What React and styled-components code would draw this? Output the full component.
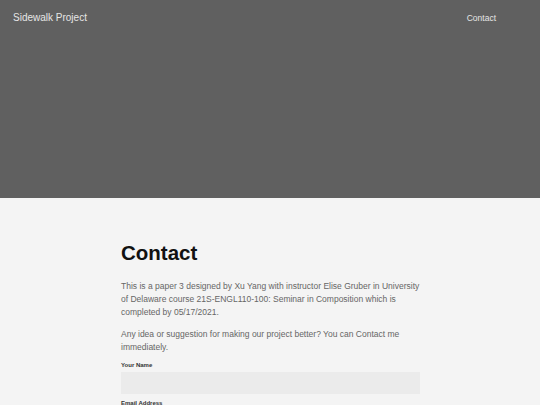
import styled, { createGlobalStyle } from 'styled-components';

const GlobalStyle = createGlobalStyle`
  html, body {
    margin: 0;
    padding: 0;
    background: #f4f4f4;
    font-family: "Liberation Sans", Arial, sans-serif;
  }
  * { box-sizing: border-box; }
`;

const Hero = styled.header`
  height: 198px;
  background: #606060;
  display: flex;
  flex-direction: column;
`;

const Nav = styled.nav`
  display: flex;
  justify-content: space-between;
  align-items: center;
  padding: 12px 44px 0 13px;
`;

const Brand = styled.a`
  color: #e6e6e6;
  font-size: 10px;
  line-height: 12px;
  text-decoration: none;
`;

const NavLink = styled.a`
  color: #e6e6e6;
  font-size: 8.5px;
  line-height: 12px;
  text-decoration: none;
`;

const Main = styled.main`
  width: 300px;
  margin: 0 auto;
  padding: 43px 0 0 1px;
`;

const Title = styled.h1`
  margin: 0 0 15px;
  font-size: 20.5px;
  line-height: 24px;
  font-weight: 700;
  color: #111;
`;

const Intro = styled.div`
  display: flex;
  flex-direction: column;
  gap: 10px;
  margin-bottom: 8px;
`;

const Text = styled.p`
  margin: 0;
  font-size: 8.5px;
  line-height: 12.8px;
  color: #666;
`;

const Form = styled.form`
  display: flex;
  flex-direction: column;
`;

const Field = styled.div`
  display: flex;
  flex-direction: column;
  margin-bottom: 6px;
`;

const Label = styled.label`
  font-size: 6px;
  line-height: 7.2px;
  font-weight: 700;
  color: #333;
  margin-bottom: 3px;
`;

const Input = styled.input`
  height: 22px;
  border: none;
  background: #ebebeb;
  padding: 0 6px;
  font-size: 8px;
  font-family: inherit;
  outline: none;
`;

export default function App() {
  return (
    <>
      <GlobalStyle />
      <Hero>
        <Nav>
          <Brand href="#">Sidewalk Project</Brand>
          <NavLink href="#">Contact</NavLink>
        </Nav>
      </Hero>
      <Main>
        <Title>Contact</Title>
        <Intro>
          <Text>
            This is a paper 3 designed by Xu Yang with instructor Elise Gruber in University
            of Delaware course 21S-ENGL110-100: Seminar in Composition which is
            completed by 05/17/2021.
          </Text>
          <Text>
            Any idea or suggestion for making our project better? You can Contact me
            immediately.
          </Text>
        </Intro>
        <Form>
          <Field>
            <Label>Your Name</Label>
            <Input type="text" />
          </Field>
          <Field>
            <Label>Email Address</Label>
            <Input type="email" />
          </Field>
        </Form>
      </Main>
    </>
  );
}
